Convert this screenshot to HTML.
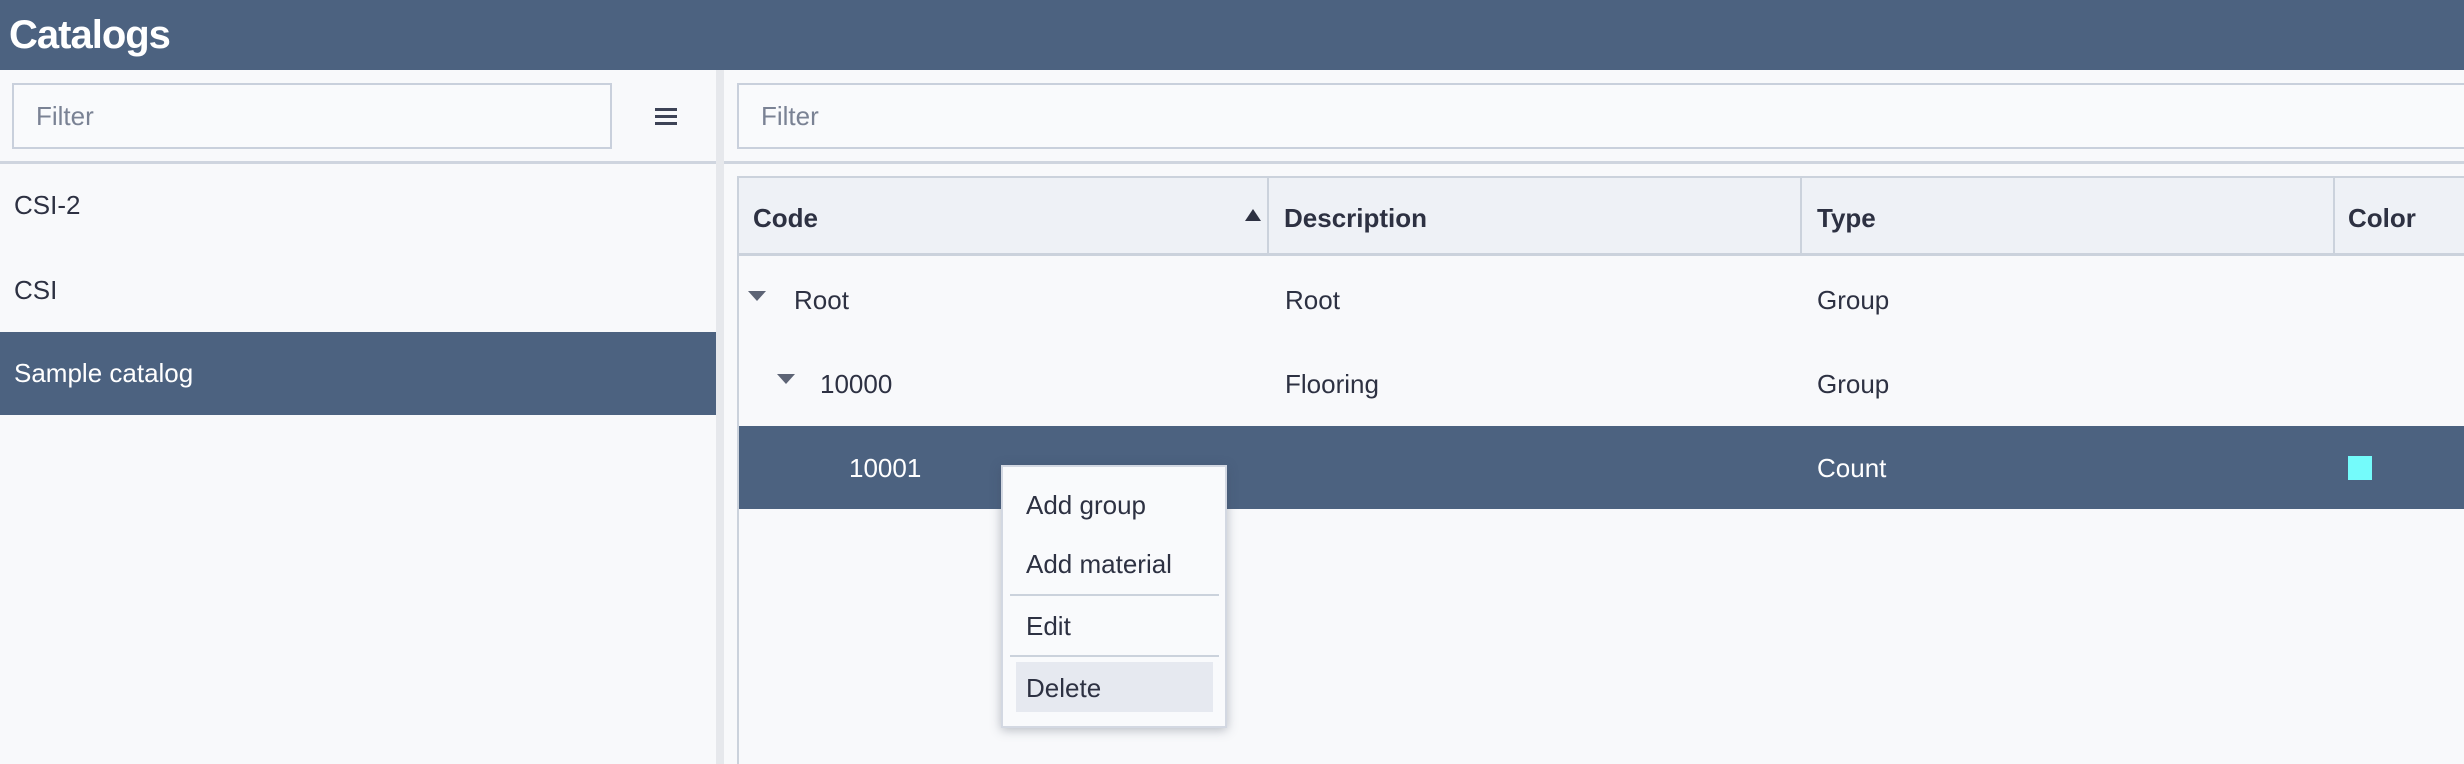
<!DOCTYPE html>
<html><head><meta charset="utf-8"><style>
*{box-sizing:border-box;margin:0;padding:0}
html,body{width:2464px;height:764px;overflow:hidden}
body{background:#f8f9fb;font-family:"Liberation Sans",sans-serif;color:#2d3142;position:relative}
.abs{position:absolute}
.hdr{left:0;top:0;width:2464px;height:70px;background:#4c6280;color:#fff;font-weight:bold;font-size:40px;line-height:70px;padding-left:9px;letter-spacing:-1px}
.inp{border:2px solid #c9d0dc;background:#f9fafc;height:66px;font-size:26px;color:#7a8294;line-height:62px;padding-left:22px}
.t{font-size:26px;line-height:1}
.tri{width:0;height:0;border-left:9px solid transparent;border-right:9px solid transparent;border-top:10px solid #5d6475}
</style></head><body>
<div class="abs hdr">Catalogs</div>
<div class="abs inp" style="left:12px;top:83px;width:600px">Filter</div>
<div class="abs" style="left:655px;top:108px;width:22px;height:3px;background:#3d4356"></div>
<div class="abs" style="left:655px;top:115px;width:22px;height:3px;background:#3d4356"></div>
<div class="abs" style="left:655px;top:122px;width:22px;height:3px;background:#3d4356"></div>
<div class="abs" style="left:0;top:161px;width:716px;height:3px;background:#cfd5df"></div>
<div class="abs" style="left:716px;top:70px;width:8px;height:694px;background:#e6e8ec"></div>
<div class="abs t" style="left:14px;top:192px">CSI-2</div>
<div class="abs t" style="left:14px;top:277px">CSI</div>
<div class="abs" style="left:0;top:332px;width:716px;height:83px;background:#4c6280"></div>
<div class="abs t" style="left:14px;top:360px;color:#fff">Sample catalog</div>

<div class="abs inp" style="left:737px;top:83px;width:1740px">Filter</div>
<div class="abs" style="left:724px;top:161px;width:1740px;height:3px;background:#cfd5df"></div>
<div class="abs" style="left:737px;top:176px;width:1740px;height:588px;border:2px solid #cbd2dc;border-right:none;border-bottom:none"></div>
<div class="abs" style="left:739px;top:178px;width:1730px;height:78px;background:#eef1f6;border-bottom:3px solid #cbd2dc"></div>
<div class="abs" style="left:1267px;top:178px;width:2px;height:77px;background:#cbd2dc"></div>
<div class="abs" style="left:1800px;top:178px;width:2px;height:77px;background:#cbd2dc"></div>
<div class="abs" style="left:2333px;top:178px;width:2px;height:77px;background:#cbd2dc"></div>
<div class="abs t" style="left:753px;top:205px;font-weight:bold">Code</div>
<div class="abs" style="left:1245px;top:209px;width:0;height:0;border-left:8px solid transparent;border-right:8px solid transparent;border-bottom:12px solid #2d3142"></div>
<div class="abs t" style="left:1284px;top:205px;font-weight:bold">Description</div>
<div class="abs t" style="left:1817px;top:205px;font-weight:bold">Type</div>
<div class="abs t" style="left:2348px;top:205px;font-weight:bold">Color</div>

<div class="abs tri" style="left:748px;top:291px"></div>
<div class="abs t" style="left:794px;top:287px">Root</div>
<div class="abs t" style="left:1285px;top:287px">Root</div>
<div class="abs t" style="left:1817px;top:287px">Group</div>
<div class="abs tri" style="left:777px;top:374px"></div>
<div class="abs t" style="left:820px;top:371px">10000</div>
<div class="abs t" style="left:1285px;top:371px">Flooring</div>
<div class="abs t" style="left:1817px;top:371px">Group</div>
<div class="abs" style="left:739px;top:426px;width:1730px;height:83px;background:#4c6280"></div>
<div class="abs t" style="left:849px;top:455px;color:#fff">10001</div>
<div class="abs t" style="left:1817px;top:455px;color:#fff">Count</div>
<div class="abs" style="left:2348px;top:456px;width:24px;height:24px;background:#74fbfb"></div>

<div class="abs" style="left:1001px;top:465px;width:226px;height:263px;background:#f9fafc;border:2px solid #d3d8e2;box-shadow:0 2px 10px rgba(60,70,90,.35)"></div>
<div class="abs t" style="left:1026px;top:492px">Add group</div>
<div class="abs t" style="left:1026px;top:551px">Add material</div>
<div class="abs" style="left:1010px;top:594px;width:209px;height:2px;background:#cbd2dc"></div>
<div class="abs t" style="left:1026px;top:613px">Edit</div>
<div class="abs" style="left:1010px;top:655px;width:209px;height:2px;background:#cbd2dc"></div>
<div class="abs" style="left:1016px;top:662px;width:197px;height:50px;background:#e6e9f0"></div>
<div class="abs t" style="left:1026px;top:675px">Delete</div>
</body></html>
